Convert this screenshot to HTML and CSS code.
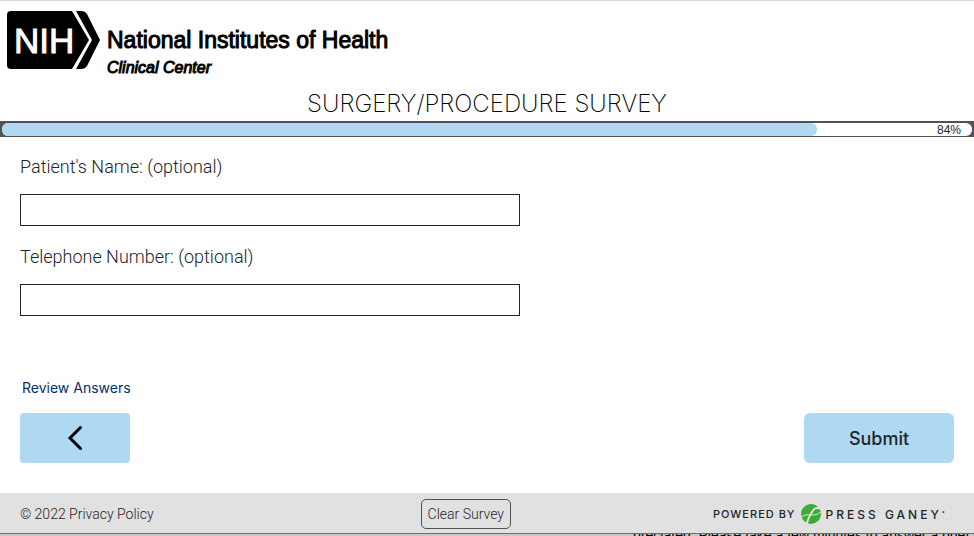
FILE: index.html
```html
<!DOCTYPE html>
<html lang="en">
<head>
<meta charset="utf-8">
<title>Surgery/Procedure Survey</title>
<meta name="viewport" content="width=device-width, initial-scale=1">
<link rel="stylesheet" href="styles.css">
</head>
<body>
<header class="brand">
  <svg class="brand-mark" viewBox="0 0 94 60" role="img" aria-label="NIH">
    <path d="M4 1H65L82 30L65 59H4Q0 59 0 55V5Q0 1 4 1Z"/>
    <path d="M69 1H74Q78 1 80 4L93 30L80 56Q78 59 74 59H69L85 30Z"/>
    <text class="brand-letters" x="7" y="43">NIH</text>
  </svg>
  <div class="brand-name">
    <span class="brand-org">National Institutes of Health</span>
    <span class="brand-unit">Clinical Center</span>
  </div>
</header>
<h1 class="title">SURGERY/PROCEDURE SURVEY</h1>
<div class="progress" role="progressbar" aria-label="Survey progress" aria-valuemin="0" aria-valuemax="100" aria-valuenow="84">
  <div class="progress-track">
    <div class="progress-fill" style="width: 84%"></div>
    <span class="progress-value">84%</span>
  </div>
</div>
<main class="survey">
  <form class="form">
    <div class="field">
      <label for="patient-name">Patient's Name: (optional)</label>
      <input id="patient-name" type="text">
    </div>
    <div class="field">
      <label for="telephone">Telephone Number: (optional)</label>
      <input id="telephone" type="tel">
    </div>
    <a class="review" href="#review">Review Answers</a>
    <div class="actions">
      <button class="button back" type="button" aria-label="Back">
        <svg viewBox="0 0 16 26" width="16" height="26"><path d="M13.5 2.500L3 13L13.500 23.500"/></svg>
      </button>
      <button class="button submit" type="submit">Submit</button>
    </div>
  </form>
</main>
<footer class="footer">
  <div class="legal">© 2022 <a href="#privacy">Privacy Policy</a></div>
  <button class="clear" type="button">Clear Survey</button>
  <div class="powered">
    <span class="powered-by">POWERED BY</span>
    <svg class="powered-mark" viewBox="0 0 20 20" width="20" height="20">
      <circle cx="10" cy="10" r="10"/>
      <path class="stem" d="M5.500 20Q8 12 11.500 7Q14 3 19 4.500"/>
      <path d="M0 13Q5 9.500 10 11Q15 12 20 8"/>
    </svg>
    <span class="powered-name">PRESS GANEY<span class="dot">•</span></span>
  </div>
</footer>
<div class="notice"><p>preciated. Please take a few minutes to answer a brief s</p></div>
</body>
</html>
```
FILE: styles.css
```css
* {
  box-sizing: border-box;
}

body {
  margin: 0;
  height: 100vh;
  display: flex;
  flex-direction: column;
  overflow: hidden;
  border-top: 1px solid #d9d9d9;
  background: #fff;
  color: #212529;
  font-family: Roboto, "Liberation Sans", sans-serif;
  font-weight: 300;
}

a {
  color: inherit;
  text-decoration: none;
}

.brand {
  display: flex;
  gap: 6px;
  padding: 9px 7px 0;
  color: #000;
  font-family: "Liberation Sans", sans-serif;
}

.brand-mark {
  width: 94px;
  height: 60px;
}

.brand-letters {
  fill: #fff;
  stroke: #fff;
  stroke-width: 1px;
  font-size: 35px;
  font-weight: 400;
}

.brand-name {
  display: flex;
  flex-direction: column;
  padding-top: 16px;
}

.brand-org {
  font-size: 23px;
  line-height: 28px;
  font-weight: 400;
  -webkit-text-stroke: 1px #000;
}

.brand-unit {
  font-size: 16px;
  line-height: 28px;
  font-style: italic;
  font-weight: 400;
  -webkit-text-stroke: 1px #000;
}

.title {
  margin: 6px 0 1px;
  color: #000;
  font-family: Inter, sans-serif;
  font-size: 24px;
  line-height: 32px;
  font-weight: 200;
  text-align: center;
}

.progress {
  padding: 2px 2px 1px;
  background: #505254;
}

.progress-track {
  position: relative;
  height: 13px;
  border-radius: 6px;
  background: #fff;
}

.progress-fill {
  height: 100%;
  border-radius: 6px;
  background: #afd8f2;
}

.progress-value {
  position: absolute;
  top: 0;
  right: 11px;
  font-family: "Liberation Sans", sans-serif;
  font-size: 12px;
  line-height: 14px;
  font-weight: 400;
}

.survey {
  flex: 1;
  padding: 14px 20px 0;
}

.field {
  display: flex;
  flex-direction: column;
  gap: 11px;
  max-width: 500px;
  margin-bottom: 15px;
}

.field label {
  font-size: 18px;
  line-height: 32px;
}

.field input {
  width: 100%;
  height: 32px;
  border: 1px solid #212529;
  border-radius: 0;
  padding: 4px 8px;
  background: #fff;
  font: inherit;
}

.review {
  display: block;
  width: max-content;
  margin-top: 62px;
  margin-left: 2px;
  color: #003069;
  font-family: Inter, sans-serif;
  font-size: 14px;
  line-height: 20px;
  font-weight: 400;
}

.actions {
  display: flex;
  justify-content: space-between;
  margin-top: 15px;
}

.button {
  height: 50px;
  border: 0;
  border-radius: 6px;
  background: #afd8f2;
  color: #212529;
  font-family: Inter, sans-serif;
}

.back {
  display: flex;
  align-items: center;
  justify-content: center;
  width: 110px;
  border-radius: 4px;
}

.back path {
  fill: none;
  stroke: #000;
  stroke-width: 3px;
  stroke-linecap: round;
}

.submit {
  width: 150px;
  font-size: 18px;
  font-weight: 500;
}

.footer {
  display: grid;
  grid-template-columns: 12fr auto 13fr;
  align-items: center;
  height: 41px;
  padding: 2px 29px 0 20px;
  border-bottom: 1px solid #6b6e6a;
  background: #e1e1e1;
  font-size: 14px;
}

.clear {
  width: 90px;
  height: 30px;
  padding: 0;
  border: 1px solid #505254;
  border-radius: 5px;
  background: transparent;
  color: inherit;
  font: inherit;
}

.powered {
  display: flex;
  align-items: center;
  justify-content: flex-end;
  gap: 5px;
  font-family: Inter, sans-serif;
  font-weight: 500;
}

.powered-by {
  font-size: 11px;
  letter-spacing: 1px;
}

.powered-mark circle {
  fill: #3dab35;
}

.powered-mark path {
  fill: none;
  stroke: #e1e1e1;
  stroke-width: 1px;
}

.powered-mark .stem {
  stroke-width: 2px;
}

.powered-name {
  font-size: 12px;
  letter-spacing: 3px;
}

.dot {
  font-size: 6px;
  letter-spacing: 0;
  vertical-align: super;
}

.notice {
  height: 2px;
  overflow: hidden;
  background: #c6c9c5;
  color: #000;
  font-family: "Liberation Sans", sans-serif;
  font-size: 14px;
  line-height: 14px;
  font-weight: 400;
}

.notice p {
  width: 35%;
  margin: -6px 0 0 auto;
  white-space: nowrap;
}
```
